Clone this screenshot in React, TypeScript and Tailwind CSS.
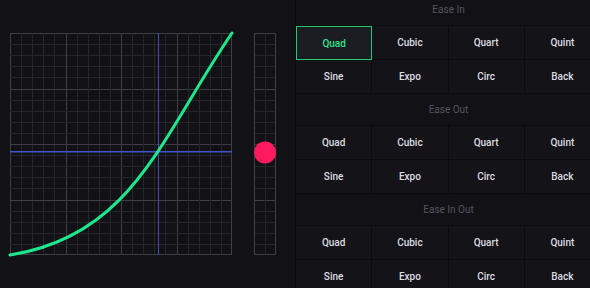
import React from "react";

const N = 20;
const S = 222;
const pos = (i: number) => Math.round((i * S) / N) + 0.5;

function Chart() {
  const lines: React.ReactNode[] = [];
  for (let i = 0; i <= N; i++) {
    const p = i === N ? S - 0.5 : pos(i);
    const major = i % 5 === 0;
    const c = major ? "#3e3e46" : "#25252d";
    lines.push(<line key={"v" + i} x1={p} y1={0} x2={p} y2={S} stroke={c} strokeWidth={1} />);
    lines.push(<line key={"h" + i} x1={0} y1={p} x2={S} y2={p} stroke={c} strokeWidth={1} />);
  }
  return (
    <svg width={S} height={S} viewBox={`0 0 ${S} ${S}`} className="block overflow-visible">
      {lines}
      <rect x={148} y={0} width={1} height={S} fill="#3b50b8" />
      <rect x={0} y={118} width={S} height={1.5} fill="#3f55c8" />
      <path
        d="M0,222 C122.1,203.1 151,104.3 222,0"
        fill="none"
        stroke="#1fe88c"
        strokeWidth={3}
        strokeLinecap="round"
      />
    </svg>
  );
}

function Track() {
  const lines: React.ReactNode[] = [];
  for (let i = 0; i <= N; i++) {
    const p = i === N ? S - 0.5 : pos(i);
    const major = i % 5 === 0;
    const c = major ? "#3e3e46" : "#25252d";
    lines.push(<line key={"h" + i} x1={0} y1={p} x2={22} y2={p} stroke={c} strokeWidth={1} />);
  }
  return (
    <svg width={22} height={S} viewBox={`0 0 22 ${S}`} className="block overflow-visible">
      {lines}
      <line x1={11.5} y1={0} x2={11.5} y2={S} stroke="#25252d" strokeWidth={1} />
      <line x1={0.5} y1={0} x2={0.5} y2={S} stroke="#3e3e46" strokeWidth={1} />
      <line x1={21.5} y1={0} x2={21.5} y2={S} stroke="#3e3e46" strokeWidth={1} />
      <circle cx={11} cy={119.5} r={11} fill="#ff1a5d" />
    </svg>
  );
}

const rows = [
  ["Quad", "Cubic", "Quart", "Quint"],
  ["Sine", "Expo", "Circ", "Back"],
];

function Section({ title, selected }: { title: string; selected?: string }) {
  return (
    <div>
      <div className="h-[32px] flex items-center justify-center text-[10px] text-[#56565e] border-b border-[#0b0b0e]">
        {title}
      </div>
      {rows.map((r, ri) => (
        <div key={ri} className="grid grid-cols-4">
          {r.map((name) => {
            const sel = name === selected;
            return (
              <div
                key={name}
                className={
                  sel
                    ? "h-[34px] flex items-center justify-center text-[10px] font-medium text-[#2de389] bg-[#1c1c23] border border-[#23c774]"
                    : "h-[34px] flex items-center justify-center text-[10px] font-medium text-[#dcdce0] bg-[#131318] border-r border-b border-[#0b0b0e]"
                }
              >
                {name}
              </div>
            );
          })}
        </div>
      ))}
    </div>
  );
}

export default function App() {
  return (
    <div
      className="w-[590px] h-[288px] overflow-hidden bg-[#111116]"
      style={{ fontFamily: "Roboto, 'Liberation Sans', sans-serif" }}
    >
      <div className="flex w-[601px] h-[288px]">
        <div className="w-[295px] shrink-0 pt-[33px] pl-[10px] flex gap-[22px]">
          <Chart />
          <Track />
        </div>
        <div className="w-[306px] shrink-0 mt-[-6px] border-l border-[#0b0b0e]">
          <Section title="Ease In" selected="Quad" />
          <Section title="Ease Out" />
          <Section title="Ease In Out" />
        </div>
      </div>
    </div>
  );
}
